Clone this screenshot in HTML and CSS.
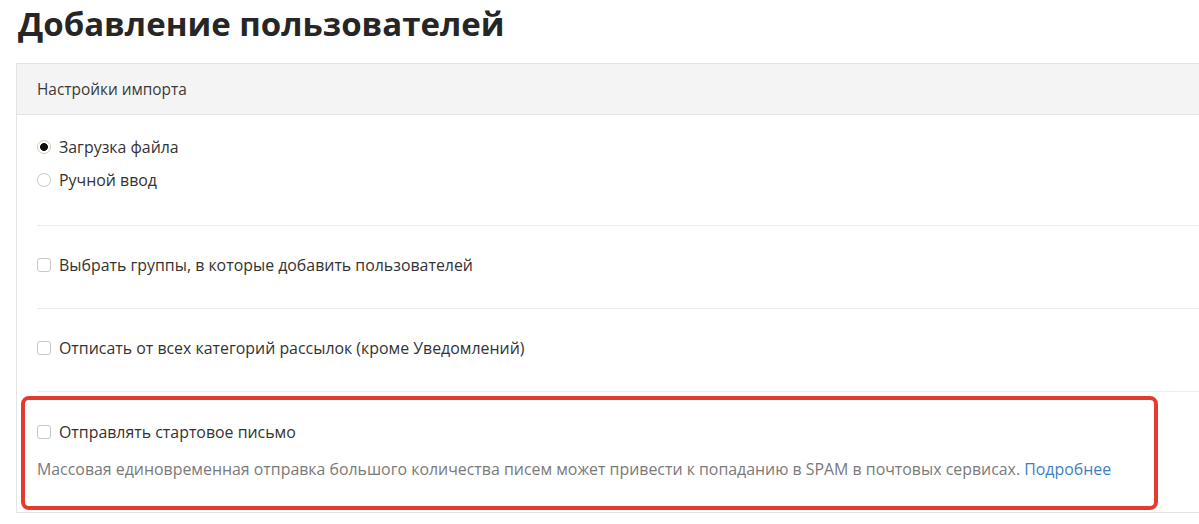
FILE: index.html
```html
<!DOCTYPE html>
<html lang="ru">
<head>
  <meta charset="UTF-8" />
  <meta name="viewport" content="width=device-width, initial-scale=1.0"/>
  <title>Добавление пользователей</title>
  <link rel="stylesheet" href="styles.css">
</head>
<body>
  <div class="page">
    <h1>Добавление пользователей</h1>

    <div class="card">
      <div class="card-header">Настройки импорта</div>

      <div class="section section-radios">
        <label class="option">
          <input type="radio" name="mode" checked>
          <span>Загрузка файла</span>
        </label>
        <label class="option">
          <input type="radio" name="mode">
          <span>Ручной ввод</span>
        </label>
      </div>

      <div class="section">
        <label class="option">
          <input type="checkbox">
          <span>Выбрать группы, в которые добавить пользователей</span>
        </label>
      </div>

      <div class="section">
        <label class="option">
          <input type="checkbox">
          <span>Отписать от всех категорий рассылок (кроме Уведомлений)</span>
        </label>
      </div>

      <div class="highlight">
        <label class="option">
          <input type="checkbox">
          <span>Отправлять стартовое письмо</span>
        </label>
        <p class="hint">Массовая единовременная отправка большого количества писем может привести к попаданию в SPAM в почтовых сервисах. <a href="#">Подробнее</a></p>
      </div>
    </div>
  </div>
</body>
</html>
```

FILE: styles.css
```css
* {
  margin: 0;
  padding: 0;
  box-sizing: border-box;
  font-family: 'Open Sans', sans-serif;
}

html, body {
  overflow: hidden;
}

body {
  background-color: #fff;
  color: #333;
}

.page {
  padding-left: 16px;
}

h1 {
  font-size: 33px;
  font-weight: 700;
  color: #262626;
  line-height: 46px;
  padding: 1px 0 0 2px;
  margin-bottom: 16px;
}

.card {
  width: 1240px;
  border: 1px solid #e3e3e3;
}

.card-header {
  height: 51px;
  padding-left: 20px;
  display: flex;
  align-items: center;
  background-color: #f4f4f4;
  border-bottom: 1px solid #e3e3e3;
  font-size: 15.4px;
  color: #3a3a3a;
}

.section {
  margin-left: 20px;
  padding: 28px 0 32px;
  border-bottom: 1px solid #ececec;
}

.section-radios {
  padding: 21px 0 34px;
  display: flex;
  flex-direction: column;
  gap: 11px;
}

.option {
  display: flex;
  align-items: center;
  gap: 8px;
  height: 22px;
  font-size: 15.9px;
  color: #333;
}

.option input {
  appearance: none;
  width: 14px;
  height: 14px;
  border: 1px solid #c8c8c8;
  background: #fff;
  flex-shrink: 0;
}

.option input[type="checkbox"] {
  border-radius: 3px;
}

.option input[type="radio"] {
  border-radius: 50%;
}

.option input[type="radio"]:checked {
  border-color: #d6cdb4;
  background: radial-gradient(circle, #111 0 3.6px, #fff 4.2px);
}

.highlight {
  width: 1137px;
  margin: 4px 0 2px 4px;
  padding: 21px 12px 26px;
  border: 4px solid #e53a30;
  border-radius: 8px;
}

.hint {
  margin-top: 15px;
  font-size: 15.9px;
  line-height: 22px;
  color: #7a7a7a;
}

.hint a {
  color: #3f7fc0;
  text-decoration: none;
}
```
